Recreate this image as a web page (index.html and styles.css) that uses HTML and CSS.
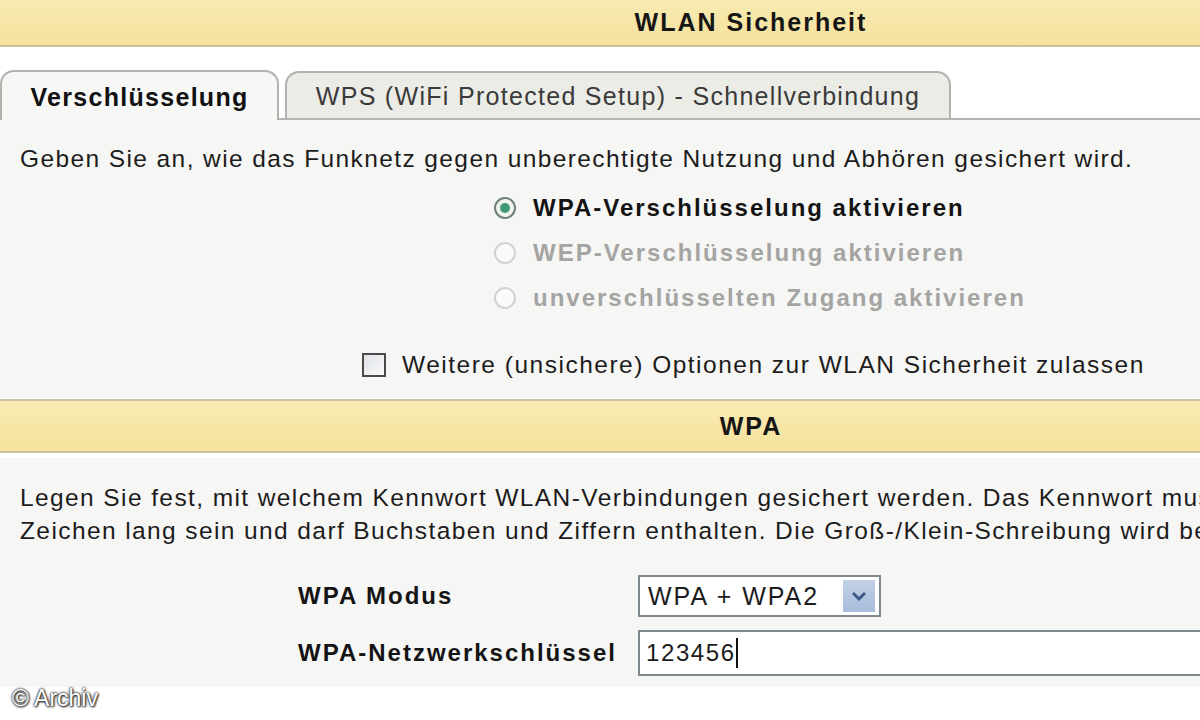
FILE: index.html
```html
<!DOCTYPE html>
<html lang="de">
<head>
<meta charset="utf-8">
<title>WLAN Sicherheit</title>
<link rel="stylesheet" href="styles.css">
</head>
<body>
<div class="page">
  <div class="bar bar-top">WLAN Sicherheit</div>
  <div class="tabs">
    <div class="tab tab-active">Verschlüsselung</div>
    <div class="tab tab-inactive">WPS (WiFi Protected Setup) - Schnellverbindung</div>
  </div>
  <div class="section section-enc">
    <p class="text">Geben Sie an, wie das Funknetz gegen unberechtigte Nutzung und Abhören gesichert wird.</p>
    <div class="radios">
      <div class="radio-row">
        <svg class="radio" width="24" height="24" viewBox="0 0 24 24"><circle cx="12" cy="12" r="10" fill="#f2f3ee" stroke="#6f7f7d" stroke-width="2"/><circle cx="12" cy="12" r="5" fill="#3f9a74"/></svg>
        <span class="radio-label">WPA-Verschlüsselung aktivieren</span>
      </div>
      <div class="radio-row disabled">
        <svg class="radio" width="24" height="24" viewBox="0 0 24 24"><circle cx="12" cy="12" r="10" fill="#fafafa" stroke="#d2d2d0" stroke-width="2"/></svg>
        <span class="radio-label">WEP-Verschlüsselung aktivieren</span>
      </div>
      <div class="radio-row disabled">
        <svg class="radio" width="24" height="24" viewBox="0 0 24 24"><circle cx="12" cy="12" r="10" fill="#fafafa" stroke="#d2d2d0" stroke-width="2"/></svg>
        <span class="radio-label">unverschlüsselten Zugang aktivieren</span>
      </div>
    </div>
    <div class="check-row">
      <span class="checkbox"></span>
      <span class="check-label">Weitere (unsichere) Optionen zur WLAN Sicherheit zulassen</span>
    </div>
  </div>
  <div class="bar bar-wpa">WPA</div>
  <div class="section section-wpa">
    <p class="text text-wide">Legen Sie fest, mit welchem Kennwort WLAN-Verbindungen gesichert werden. Das Kennwort muss mindestens 8<br>Zeichen lang sein und darf Buchstaben und Ziffern enthalten. Die Groß-/Klein-Schreibung wird beachtet.</p>
    <div class="form">
      <div class="form-label">WPA Modus</div>
      <div class="select">
        <span class="select-value">WPA + WPA2</span>
        <span class="select-btn"><svg width="18" height="12" viewBox="0 0 18 12"><path d="M3 3 L9 9 L15 3" fill="none" stroke="#3f5a86" stroke-width="3"/></svg></span>
      </div>
      <div class="form-label">WPA-Netzwerkschlüssel</div>
      <div class="input"><span>123456</span><span class="caret"></span></div>
    </div>
  </div>
  <div class="watermark">© Archiv</div>
</div>
</body>
</html>
```
FILE: styles.css
```css
html, body {
  margin: 0;
  padding: 0;
  background: #ffffff;
  overflow: hidden;
}
body {
  font-family: "Liberation Sans", Arial, sans-serif;
  color: #1a1a1a;
  width: 1200px;
  height: 720px;
  position: relative;
}
.page {
  width: 1502px;
}
.bar {
  background: linear-gradient(#f8eab2, #f5e29c);
  text-align: center;
  font-weight: bold;
  font-size: 25px;
  letter-spacing: 2px;
  color: #161616;
}
.bar-top {
  height: 45px;
  line-height: 45px;
  border-bottom: 2px solid #cbc2a0;
}
.tabs {
  display: flex;
  align-items: flex-end;
  padding-top: 23px;
  border-bottom: 2px solid #b4b4b0;
  background: #ffffff;
}
.tab {
  box-sizing: border-box;
  border: 2px solid #b2b2ae;
  border-bottom: none;
  border-radius: 14px 14px 0 0;
  font-size: 25px;
  letter-spacing: 1.3px;
  text-align: center;
}
.tab-active {
  width: 279px;
  height: 50px;
  line-height: 50px;
  margin-bottom: -2px;
  background: #f7f7f5;
  font-weight: bold;
  color: #111;
}
.tab-inactive {
  width: 666px;
  height: 47px;
  line-height: 47px;
  margin-left: 6px;
  background: #ececE7;
  color: #3a3a3a;
}
.section {
  background: #f6f6f4;
  padding: 0 20px;
}
.section-enc {
  padding-top: 22px;
  padding-bottom: 11px;
}
.text {
  margin: 0;
  font-size: 24.5px;
  letter-spacing: 1.4px;
  line-height: 33px;
  color: #1c1c1c;
}
.text-wide {
  white-space: nowrap;
}
.radios {
  margin-top: 10px;
  padding-left: 473px;
}
.radio-row {
  display: flex;
  align-items: center;
  height: 45px;
  gap: 16px;
}
.radio-label {
  font-weight: bold;
  font-size: 24px;
  letter-spacing: 2px;
  color: #141414;
}
.disabled .radio-label {
  color: #a4a4a2;
}
.check-row {
  display: flex;
  align-items: center;
  height: 45px;
  margin-top: 22px;
  padding-left: 342px;
  gap: 16px;
}
.checkbox {
  box-sizing: border-box;
  width: 24px;
  height: 24px;
  border: 2px solid #4a4a4a;
  background: linear-gradient(135deg, #dfe3e8, #f8f8f8);
}
.check-label {
  font-size: 24.5px;
  letter-spacing: 1.5px;
  color: #1c1c1c;
}
.bar-wpa {
  margin-top: 1px;
  height: 50px;
  line-height: 50px;
  border-top: 2px solid #cbc2a0;
  border-bottom: 2px solid #cbc2a0;
}
.section-wpa {
  margin-top: 5px;
  padding-top: 23px;
  padding-bottom: 11px;
}
.form {
  display: grid;
  grid-template-columns: 340px 760px;
  row-gap: 13px;
  align-items: center;
  margin-top: 28px;
  margin-left: 278px;
}
.form-label {
  font-weight: bold;
  font-size: 24px;
  letter-spacing: 2px;
  color: #141414;
}
.select {
  box-sizing: border-box;
  width: 243px;
  height: 42px;
  border: 2px solid #7f8a90;
  background: #ffffff;
  display: flex;
  align-items: center;
  justify-content: space-between;
  padding: 0 4px 0 8px;
}
.select-value {
  font-size: 25px;
  letter-spacing: 2px;
  color: #1c1c1c;
}
.select-btn {
  width: 32px;
  height: 32px;
  background: linear-gradient(#c2d0e6, #a9bcdc);
  display: flex;
  align-items: center;
  justify-content: center;
}
.input {
  box-sizing: border-box;
  width: 700px;
  height: 46px;
  border: 2px solid #7f8a90;
  background: #ffffff;
  display: flex;
  align-items: center;
  padding-left: 6px;
  font-size: 24px;
  letter-spacing: 1.6px;
  color: #1c1c1c;
}
.caret {
  display: inline-block;
  width: 2px;
  height: 30px;
  background: #111;
  margin-left: 0;
}
.watermark {
  position: absolute;
  left: 12px;
  top: 685px;
  font-size: 23px;
  color: #ffffff;
  text-shadow: 0 0 3px #222, 0 0 2px #222, 1px 1px 2px #333;
}
```
